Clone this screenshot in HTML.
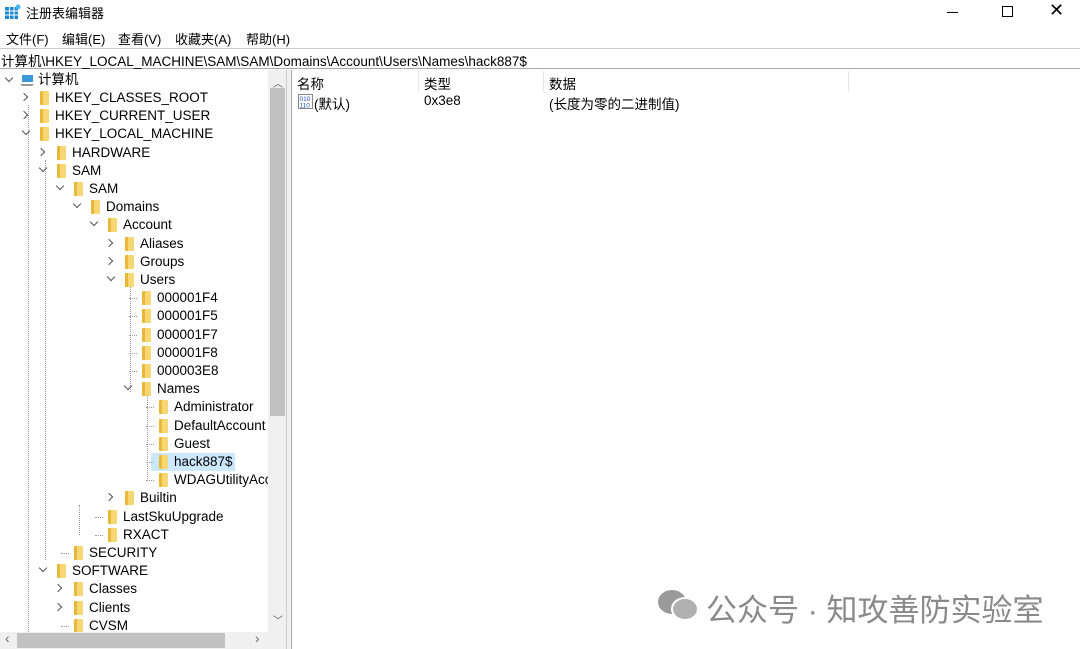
<!DOCTYPE html>
<html><head><meta charset="utf-8"><style>
*{margin:0;padding:0;box-sizing:border-box}
body{width:1080px;height:649px;overflow:hidden;background:#fff;font-family:"Liberation Sans","Noto Sans CJK SC",sans-serif;font-size:13.5px;color:#000;position:relative}
.abs{position:absolute;white-space:nowrap}
.row{position:absolute;height:18px;line-height:18px;white-space:nowrap}
.fold{position:absolute;width:9px;height:14px;background:linear-gradient(90deg,#e8b83a 0 3px,#f7d774 3px);border-radius:1px}
.chev{position:absolute;width:6px;height:6px;border-right:1.4px solid #555;border-bottom:1.4px solid #555}
.r{transform:rotate(-45deg)}.d{transform:rotate(45deg)}
.vl{position:absolute;border-left:1px dotted #999}
.hl{position:absolute;border-top:1px dotted #999;width:8px}
.sb{z-index:5}
</style></head><body>
<svg class="abs" style="left:5px;top:4px" width="16" height="16"><rect x="0" y="3" width="13" height="12" fill="#1e88d8"/><g stroke="#fff" stroke-width="1"><line x1="4.5" y1="3" x2="4.5" y2="15"/><line x1="9" y1="3" x2="9" y2="15"/><line x1="0" y1="7" x2="13" y2="7"/><line x1="0" y1="11" x2="13" y2="11"/></g><circle cx="13" cy="3" r="2.5" fill="#49b7f5"/></svg>
<div class="abs" style="left:26px;top:3px;font-size:13px">注册表编辑器</div>
<div class="abs" style="left:947px;top:12px;width:11px;border-top:1px solid #000"></div>
<div class="abs" style="left:1002px;top:6px;width:11px;height:11px;border:1px solid #000"></div>
<div class="abs" style="left:1049px;top:0px;font-size:18px;font-weight:300">✕</div>
<div class="abs" style="left:6px;top:29px;font-size:13px">文件(F)</div>
<div class="abs" style="left:62px;top:29px;font-size:13px">编辑(E)</div>
<div class="abs" style="left:118px;top:29px;font-size:13px">查看(V)</div>
<div class="abs" style="left:175px;top:29px;font-size:13px">收藏夹(A)</div>
<div class="abs" style="left:246px;top:29px;font-size:13px">帮助(H)</div>
<div class="abs" style="left:0;top:48px;width:1080px;height:21px;border-top:1px solid #ccc;border-bottom:1px solid #aaa"></div>
<div class="abs" style="left:1px;top:50px;font-size:13.5px">计算机\HKEY_LOCAL_MACHINE\SAM\SAM\Domains\Account\Users\Names\hack887$</div>
<div class="abs sb" style="left:286px;top:70px;width:6px;height:579px;background:#f0f0f0;border-left:1px solid #ccc;border-right:1px solid #aaa"></div>
<div class="abs sb" style="left:268px;top:70px;width:18px;height:562px;background:#f0f0f0"></div>
<div class="abs sb" style="left:270px;top:88px;width:15px;height:328px;background:#c1c1c1"></div>
<div class="abs sb" style="left:273px;top:75px;font-size:10px;color:#555">︿</div>
<div class="abs sb" style="left:273px;top:612px;font-size:10px;color:#555">﹀</div>
<div class="abs sb" style="left:0;top:632px;width:286px;height:17px;background:#f0f0f0"></div>
<div class="abs sb" style="left:17px;top:633px;width:208px;height:15px;background:#c1c1c1"></div>
<div class="abs sb" style="left:5px;top:631px;color:#666">‹</div>
<div class="abs sb" style="left:255px;top:631px;color:#666">›</div>
<div class="abs" style="left:297px;top:73px">名称</div>
<div class="abs" style="left:424px;top:73px">类型</div>
<div class="abs" style="left:549px;top:73px">数据</div>
<div class="abs" style="left:418px;top:71px;height:21px;border-left:1px solid #e5e5e5"></div>
<div class="abs" style="left:543px;top:71px;height:21px;border-left:1px solid #e5e5e5"></div>
<div class="abs" style="left:848px;top:71px;height:21px;border-left:1px solid #e5e5e5"></div>
<svg class="abs" style="left:298px;top:94px" width="15" height="15"><rect x="0.5" y="0.5" width="14" height="14" fill="#fff" stroke="#888"/><text x="1.5" y="7" font-size="6.5" fill="#2255bb" font-family="Liberation Sans">010</text><text x="1.5" y="13.5" font-size="6.5" fill="#2255bb" font-family="Liberation Sans">110</text></svg>
<div class="abs" style="left:314px;top:93px">(默认)</div>
<div class="abs" style="left:424px;top:93px">0x3e8</div>
<div class="abs" style="left:549px;top:93px">(长度为零的二进制值)</div>
<div class="chev d" style="left:6px;top:75px"></div>
<svg class="abs" style="left:20px;top:72px" width="16" height="16"><path d="M2 3h11v7H2z" fill="#3a9ad9"/><path d="M0 12h14l-2 2H2z" fill="#999"/></svg>
<div class="row" style="left:38px;top:71px">计算机</div>
<div class="abs" style="left:151px;top:453px;width:84px;height:18px;background:#cce8ff"></div>
<div id="t" style="position:absolute;left:0;top:0;width:268px;height:632px;overflow:hidden;z-index:2"></div>
<script>
var rows=[[1,'HKEY_CLASSES_ROOT','r'],[1,'HKEY_CURRENT_USER','r'],[1,'HKEY_LOCAL_MACHINE','d'],[2,'HARDWARE','r'],[2,'SAM','d'],[3,'SAM','d'],[4,'Domains','d'],[5,'Account','d'],[6,'Aliases','r'],[6,'Groups','r'],[6,'Users','d'],[7,'000001F4',''],[7,'000001F5',''],[7,'000001F7',''],[7,'000001F8',''],[7,'000003E8',''],[7,'Names','d'],[8,'Administrator',''],[8,'DefaultAccount',''],[8,'Guest',''],[8,'hack887$',''],[8,'WDAGUtilityAccount',''],[6,'Builtin','r'],[5,'LastSkuUpgrade',''],[5,'RXACT',''],[3,'SECURITY',''],[2,'SOFTWARE','d'],[3,'Classes','r'],[3,'Clients','r'],[3,'CVSM','']];
var h='';
rows.forEach(function(r,i){var y=89+i*18.2;var tx=38+17*r[0];var fx=tx-15;
if(r[2])h+='<div class="chev '+r[2]+'" style="left:'+(tx-32+(r[2]=='d'?0:-2))+'px;top:'+(y+(r[2]=='d'?3:5))+'px"></div>';
else h+='<div class="hl" style="left:'+(tx-28)+'px;top:'+(y+9)+'px"></div>';
h+='<div class="fold" style="left:'+fx+'px;top:'+(y+2)+'px"></div>';
h+='<div class="row" style="left:'+tx+'px;top:'+y+'px">'+r[1]+'</div>';});
document.getElementById('t').innerHTML=h;
</script>
<div class="vl" style="left:28px;top:105px;height:527px"></div>
<div class="vl" style="left:45px;top:160px;height:400px"></div>
<div class="vl" style="left:130px;top:287px;height:105px"></div>
<div class="vl" style="left:147px;top:396px;height:85px"></div>
<div class="vl" style="left:79px;top:505px;height:30px"></div>
<svg class="abs" style="left:656px;top:588px" width="44" height="34"><ellipse cx="16" cy="14" rx="14" ry="12" fill="#9a9a9a"/><ellipse cx="29" cy="21" rx="13" ry="11" fill="#b0b0b0" stroke="#fff" stroke-width="2"/></svg>
<div class="abs" style="left:706px;top:585px;font-size:31px;color:#8a8a8a">公众号 · 知攻善防实验室</div>
</body></html>
